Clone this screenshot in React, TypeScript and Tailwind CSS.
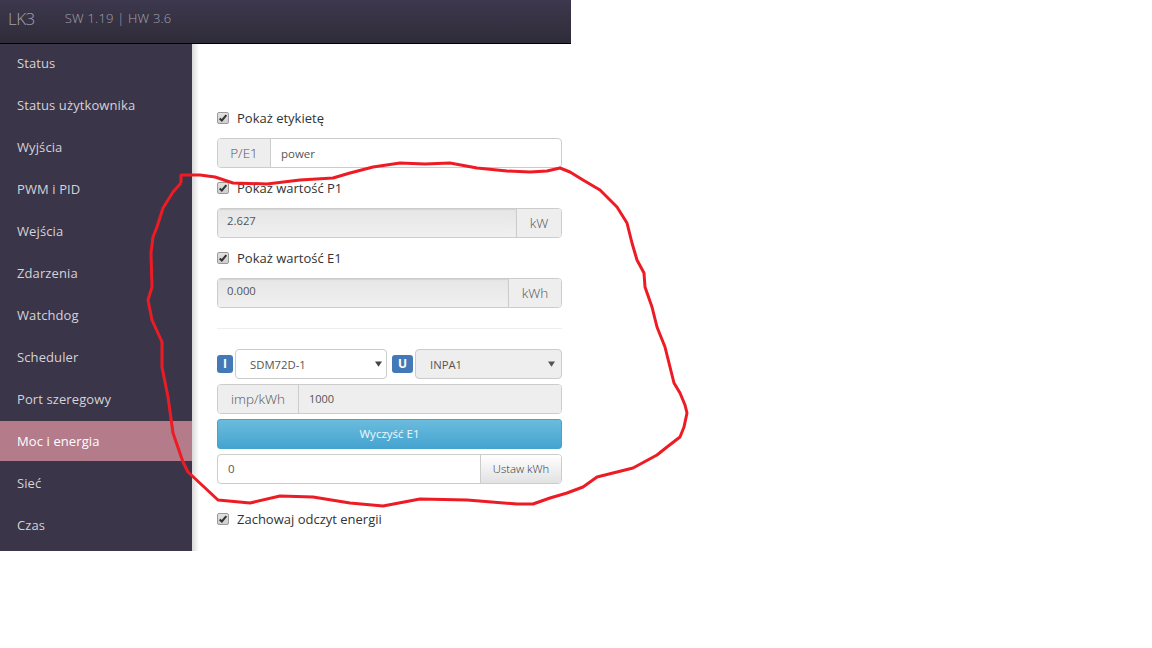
const menu = ["Status", "Status użytkownika", "Wyjścia", "PWM i PID", "Wejścia", "Zdarzenia", "Watchdog", "Scheduler", "Port szeregowy", "Moc i energia", "Sieć", "Czas"];

const scribble = "M181 183 L181 175 L200 175 L215 177 L233 183 L267 184 L300 180 L333 178 L350 173 L373 167 L400 163 L425 164 L450 163 L477 168 L507 171 L530 172 L547 171 L560 168 L570 172 L583 180 L600 190 L617 207 L627 223 L632 243 L637 260 L644 273 L645 287 L652 307 L657 327 L665 347 L670 367 L674 383 L680 393 L685 405 L687 413 L684 427 L680 437 L667 447 L657 455 L633 468 L613 473 L597 477 L583 487 L567 493 L550 498 L533 504 L517 504 L467 500 L420 499 L383 506 L350 503 L313 497 L280 496 L250 503 L218 500 L188 472 L183 462 L173 433 L168 397 L162 367 L162 342 L152 320 L148 300 L152 287 L151 253 L153 237 L157 227 L163 208 L173 192 L181 183";

function Check({ label }: { label: string }) {
  return (
    <label className="flex items-center h-[20px] text-[13px] text-[#333]">
      <span className="w-[12px] h-[12px] rounded-[2px] border border-[#9a9a9a] bg-gradient-to-b from-[#e2e2e2] to-[#cfcfcf] flex items-center justify-center">
        <svg viewBox="0 0 12 12" className="w-[10px] h-[10px]">
          <path d="M2 6.5 L4.6 9 L10 2.5" fill="none" stroke="#333" strokeWidth="2.4" />
        </svg>
      </span>
      <span className="ml-[8px] pt-[2px]">{label}</span>
    </label>
  );
}

function Addon({ text, className }: { text: string; className: string }) {
  return <span className={`flex items-center justify-center bg-[#eeeeee] text-[#555] text-[13.5px] font-light ${className}`}>{text}</span>;
}

function Readout({ value, unit, unitWidth }: { value: string; unit: string; unitWidth: string }) {
  return (
    <div className="flex h-[30px] rounded-[4px] border border-[#cccccc] overflow-hidden">
      <span className="flex-1 flex items-center pl-[9px] pb-[3px] text-[11.3px] text-[#555] bg-gradient-to-b from-[#e6e6e6] to-[#f0f0f0] shadow-[inset_0_1px_1px_rgba(0,0,0,0.08)]">{value}</span>
      <Addon text={unit} className={`border-l border-[#cccccc] ${unitWidth}`} />
    </div>
  );
}

export default function App() {
  return (
    <div className="relative min-h-[648px] bg-white font-['Open_Sans',sans-serif]">
      <div className="w-[571px]">
        <header className="h-[44px] border-b border-black bg-gradient-to-b from-[#3d384e] to-[#2f2c39] flex items-center pb-[6px] text-[#a3a1aa]">
          <span className="ml-[8px] text-[17px] font-light tracking-[-0.5px]">LK3</span>
          <span className="ml-[30px] text-[13px] font-light tracking-[0.2px]">SW 1.19 | HW 3.6</span>
        </header>
        <div className="flex h-[507px]">
          <nav className="w-[192px] bg-[#3a3549] flex flex-col gap-[2px]">
            {menu.map((item) => (
              <a key={item} className={`h-[40px] first:h-[39px] pt-[2px] first:pt-px shrink-0 flex items-center pl-[17px] text-[13px] tracking-[0.1px] ${item === "Moc i energia" ? "bg-[#b47b8b] text-white" : "text-[#d4d3d8]"}`}>
                {item}
              </a>
            ))}
          </nav>
          <main className="flex-1 pl-[25px] pr-[9px] pt-[64px] bg-[linear-gradient(to_right,#d8d8d8,#ffffff_7px)]">
            <Check label="Pokaż etykietę" />
            <div className="mt-[10px] flex h-[30px] rounded-[4px] border border-[#cccccc] overflow-hidden bg-white">
              <Addon text="P/E1" className="w-[53px] border-r border-[#cccccc]" />
              <span className="flex-1 flex items-center pl-[10px] pt-[2px] text-[11.5px] text-[#555]">power</span>
            </div>
            <div className="mt-[10px]"><Check label="Pokaż wartość P1" /></div>
            <div className="mt-[10px]"><Readout value="2.627" unit="kW" unitWidth="w-[45px]" /></div>
            <div className="mt-[10px]"><Check label="Pokaż wartość E1" /></div>
            <div className="mt-[10px]"><Readout value="0.000" unit="kWh" unitWidth="w-[53px]" /></div>
            <hr className="mt-[20px] border-t border-[#eeeeee]" />
            <div className="mt-[20px] flex items-center h-[30px]">
              <span className="w-[16px] h-[18px] rounded-[3px] bg-[#4479b8] text-white text-[12px] font-bold flex items-center justify-center">I</span>
              <div className="ml-[2px] w-[152px] h-[30px] rounded-[4px] border border-[#cccccc] bg-white flex items-center pl-[14px] pr-[4px] pt-[2px] text-[11.3px] text-[#555]">
                <span className="flex-1">SDM72D-1</span>
                <svg viewBox="0 0 8 6" className="w-[7px] h-[6px] mb-[2px]"><path d="M0 0 H8 L4 6 Z" fill="#444" /></svg>
              </div>
              <span className="ml-[5px] w-[21px] h-[18px] rounded-[3px] bg-[#4479b8] text-white text-[12px] font-bold flex items-center justify-center">U</span>
              <div className="ml-[2px] flex-1 h-[30px] rounded-[4px] border border-[#cccccc] bg-[#eeeeee] flex items-center pl-[14px] pr-[6px] pt-[2px] text-[11.3px] text-[#555]">
                <span className="flex-1">INPA1</span>
                <svg viewBox="0 0 8 6" className="w-[7px] h-[6px] mb-[2px]"><path d="M0 0 H8 L4 6 Z" fill="#555" /></svg>
              </div>
            </div>
            <div className="mt-[5px] flex h-[30px] rounded-[4px] border border-[#cccccc] overflow-hidden">
              <Addon text="imp/kWh" className="w-[81px] border-r border-[#cccccc]" />
              <span className="flex-1 flex items-center pl-[10px] text-[11px] text-[#555] bg-[#eeeeee]">1000</span>
            </div>
            <button className="mt-[5px] block w-full h-[30px] rounded-[3px] border border-[#46a3cc] bg-gradient-to-b from-[#6bbbdd] to-[#44a4d0] text-[#eef8fc] text-[11.5px]">Wyczyść E1</button>
            <div className="mt-[5px] flex h-[30px] rounded-[4px] border border-[#cccccc] overflow-hidden">
              <span className="flex-1 flex items-center pl-[10px] text-[11.5px] text-[#555]">0</span>
              <span className="w-[81px] flex items-center justify-center border-l border-[#cccccc] bg-gradient-to-b from-white to-[#e2e2e2] text-[11.3px] font-light text-[#333]">Ustaw kWh</span>
            </div>
            <div className="mt-[25px]"><Check label="Zachowaj odczyt energii" /></div>
          </main>
        </div>
      </div>
      <svg className="absolute left-0 top-0 pointer-events-none" width="1152" height="648">
        <path d={scribble} fill="none" stroke="#ed1c24" strokeWidth="3" strokeLinejoin="round" />
      </svg>
    </div>
  );
}
